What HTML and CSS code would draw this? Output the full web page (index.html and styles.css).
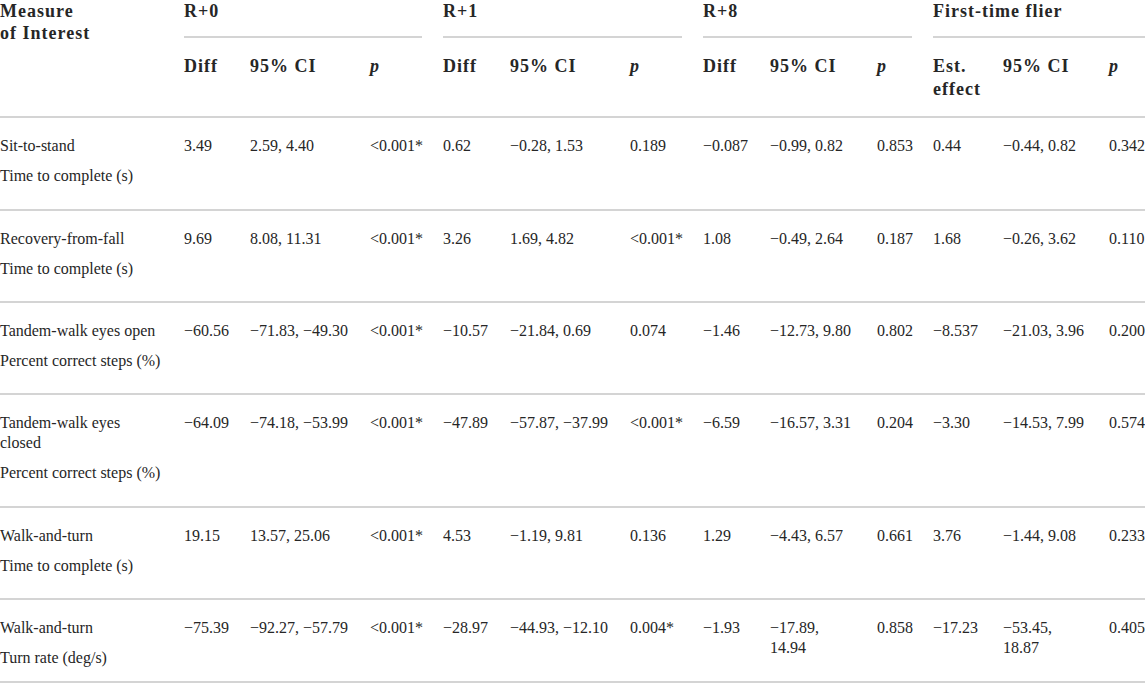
FILE: index.html
```html
<!DOCTYPE html>
<html lang="en">
<head>
    <meta charset="UTF-8">
    <meta name="viewport" content="width=device-width, initial-scale=1.0">
    <title>Balance and mobility measures</title>
    <link rel="stylesheet" href="styles.css">
</head>
<body>

    <table class="results">
        <colgroup>
            <col style="width: 184px">
            <col style="width: 66px">
            <col style="width: 120px">
            <col style="width: 73px">
            <col style="width: 67px">
            <col style="width: 120px">
            <col style="width: 73px">
            <col style="width: 67px">
            <col style="width: 107px">
            <col style="width: 56px">
            <col style="width: 70px">
            <col style="width: 106px">
            <col style="width: 36px">
        </colgroup>
        <thead>
            <tr>
                <th rowspan="2" class="measure-head">Measure<br>of Interest</th>
                <th colspan="3" class="group"><div>R+0</div></th>
                <th colspan="3" class="group"><div>R+1</div></th>
                <th colspan="3" class="group"><div>R+8</div></th>
                <th colspan="3" class="group"><div>First-time flier</div></th>
            </tr>
            <tr class="sub">
                <th>Diff</th>
                <th>95% CI</th>
                <th><i>p</i></th>
                <th>Diff</th>
                <th>95% CI</th>
                <th><i>p</i></th>
                <th>Diff</th>
                <th>95% CI</th>
                <th><i>p</i></th>
                <th>Est.<br>effect</th>
                <th>95% CI</th>
                <th><i>p</i></th>
            </tr>
        </thead>
        <tbody>
            <tr class="roomy">
                <td class="measure"><p>Sit-to-stand</p><p>Time to complete (s)</p></td>
                <td>3.49</td><td>2.59, 4.40</td><td>&lt;0.001*</td>
                <td>0.62</td><td>&minus;0.28, 1.53</td><td>0.189</td>
                <td>&minus;0.087</td><td>&minus;0.99, 0.82</td><td>0.853</td>
                <td>0.44</td><td>&minus;0.44, 0.82</td><td>0.342</td>
            </tr>
            <tr>
                <td class="measure"><p>Recovery-from-fall</p><p>Time to complete (s)</p></td>
                <td>9.69</td><td>8.08, 11.31</td><td>&lt;0.001*</td>
                <td>3.26</td><td>1.69, 4.82</td><td>&lt;0.001*</td>
                <td>1.08</td><td>&minus;0.49, 2.64</td><td>0.187</td>
                <td>1.68</td><td>&minus;0.26, 3.62</td><td>0.110</td>
            </tr>
            <tr>
                <td class="measure"><p>Tandem-walk eyes open</p><p>Percent correct steps (%)</p></td>
                <td>&minus;60.56</td><td>&minus;71.83, &minus;49.30</td><td>&lt;0.001*</td>
                <td>&minus;10.57</td><td>&minus;21.84, 0.69</td><td>0.074</td>
                <td>&minus;1.46</td><td>&minus;12.73, 9.80</td><td>0.802</td>
                <td>&minus;8.537</td><td>&minus;21.03, 3.96</td><td>0.200</td>
            </tr>
            <tr class="roomy">
                <td class="measure"><p>Tandem-walk eyes<br>closed</p><p>Percent correct steps (%)</p></td>
                <td>&minus;64.09</td><td>&minus;74.18, &minus;53.99</td><td>&lt;0.001*</td>
                <td>&minus;47.89</td><td>&minus;57.87, &minus;37.99</td><td>&lt;0.001*</td>
                <td>&minus;6.59</td><td>&minus;16.57, 3.31</td><td>0.204</td>
                <td>&minus;3.30</td><td>&minus;14.53, 7.99</td><td>0.574</td>
            </tr>
            <tr>
                <td class="measure"><p>Walk-and-turn</p><p>Time to complete (s)</p></td>
                <td>19.15</td><td>13.57, 25.06</td><td>&lt;0.001*</td>
                <td>4.53</td><td>&minus;1.19, 9.81</td><td>0.136</td>
                <td>1.29</td><td>&minus;4.43, 6.57</td><td>0.661</td>
                <td>3.76</td><td>&minus;1.44, 9.08</td><td>0.233</td>
            </tr>
            <tr class="last">
                <td class="measure"><p>Walk-and-turn</p><p>Turn rate (deg/s)</p></td>
                <td>&minus;75.39</td><td>&minus;92.27, &minus;57.79</td><td>&lt;0.001*</td>
                <td>&minus;28.97</td><td>&minus;44.93, &minus;12.10</td><td>0.004*</td>
                <td>&minus;1.93</td><td>&minus;17.89,<br>14.94</td><td>0.858</td>
                <td>&minus;17.23</td><td>&minus;53.45,<br>18.87</td><td>0.405</td>
            </tr>
        </tbody>
    </table>

</body>
</html>
```

FILE: styles.css
```css
body {
    margin: 0;
    background: #fff;
    color: #262626;
    font-family: "Liberation Serif", "Times New Roman", serif;
}
.results {
    width: 1145px;
    table-layout: fixed;
    border-collapse: collapse;
    border-spacing: 0;
}
.results th, .results td {
    text-align: left;
    vertical-align: top;
    white-space: nowrap;
    padding: 0 21px 0 0;
}
.results th:last-child, .results td:last-child {
    padding-right: 0;
}

/* header */
.results th {
    font-size: 18px;
    font-weight: bold;
    letter-spacing: 1px;
    line-height: 22px;
}
.measure-head {
    border-bottom: 2px solid #d4d4d4;
}
.group div {
    padding-bottom: 14px;
    border-bottom: 2px solid #d4d4d4;
}
.sub th {
    padding-top: 17px;
    padding-bottom: 15px;
    line-height: 23px;
    border-bottom: 2px solid #d4d4d4;
}
.sub th i {
    letter-spacing: 0;
}

/* body rows */
.results td {
    font-size: 16px;
    line-height: 20px;
    padding-top: 18px;
    padding-bottom: 22px;
    border-bottom: 2px solid #d4d4d4;
}
.results tr.roomy td {
    padding-bottom: 23px;
}
.results tr.last td {
    padding-bottom: 13px;
}
.measure p {
    margin: 0;
}
.measure p + p {
    margin-top: 10px;
}
```
